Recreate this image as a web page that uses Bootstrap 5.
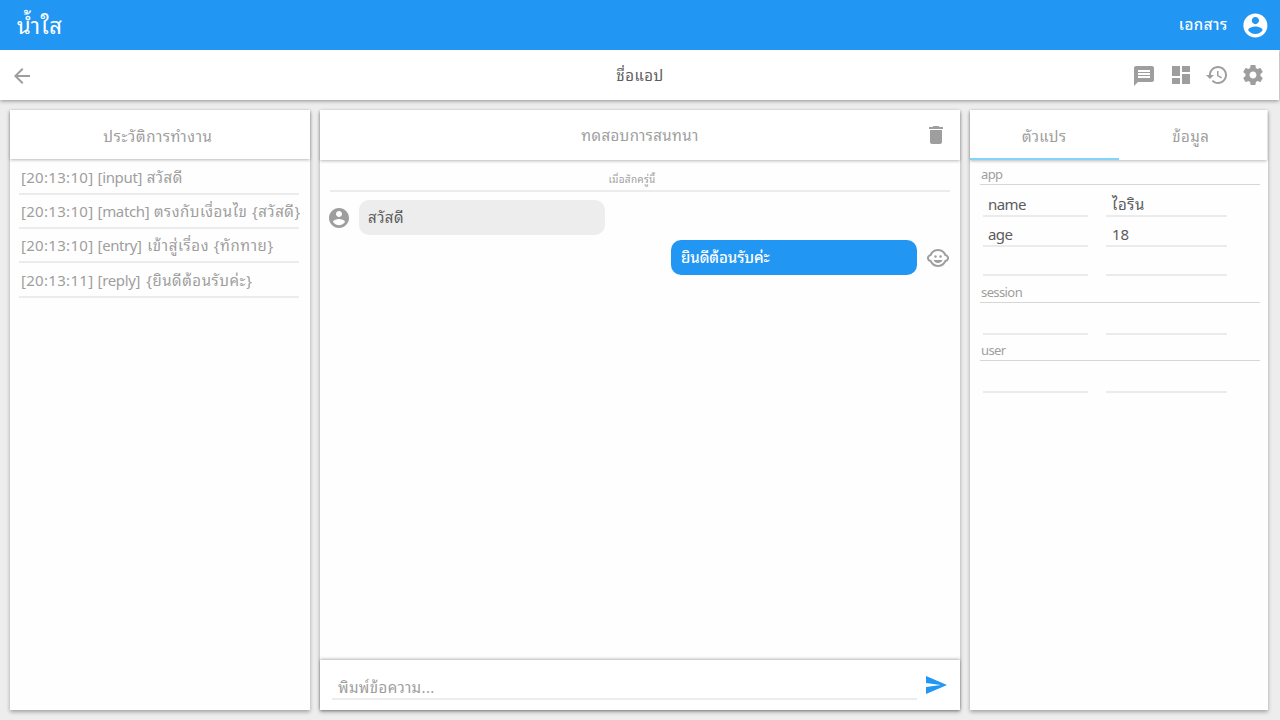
<!DOCTYPE html>
<html lang="th">
<head>
<meta charset="utf-8">
<meta name="viewport" content="width=device-width, initial-scale=1">
<title>น้ำใส</title>
<link href="https://cdn.jsdelivr.net/npm/bootstrap@5.3.0/dist/css/bootstrap.min.css" rel="stylesheet">
<style>
body{font-family:"Noto Sans","Noto Sans Thai Looped","Noto Looped Thai",Loma,Waree,"Noto Sans Thai",sans-serif;font-size:15px;line-height:20px;background:#ededed;color:#9e9e9e;height:720px;overflow:hidden}
svg{fill:#9e9e9e;width:24px;height:24px;flex:none;display:block}
.topbar{height:50px;background:#2196f3;color:#fff;padding:0 10.6px 0 17px;z-index:1}
.topbar svg{fill:#fff;width:28.8px;height:28.8px}
.brand{font-size:22px;line-height:28px;letter-spacing:.6px}
.docs{letter-spacing:.5px;font-weight:500;padding-bottom:3px;margin-right:13px}
.tools{height:50px;background:#fff;margin-right:1px;padding:0 14px 0 10px;box-shadow:0 1px 4px rgba(0,0,0,.4)}
.actions{gap:12px}
.chat-icon{margin:1px 1px -1px -1px}
.app-title{letter-spacing:.5px;padding-left:113px}
.app-title,.ink{color:#5c5c5c}
.workspace{display:grid;grid-template-columns:300px 640px 298px;gap:10px;padding:10px;height:620px}
.panel{background:#fefefe;box-shadow:0 2px 4px rgba(0,0,0,.32);height:600px}
.head{height:50px;background:#fff;box-shadow:0 1px 3px rgba(0,0,0,.28);flex:none}
.log{padding:0 11px 0 9px}
.log li{height:34px;border-bottom:2px solid #ececec;padding:6px 0 0 2px;white-space:nowrap}
.log li:first-child{height:36px;padding-top:8px}
.log li:last-child{height:35px;padding-top:7px}
.stamp{letter-spacing:.3px}
.kind{letter-spacing:-.35px}
.msg{margin-left:1px;letter-spacing:.55px}
.log li:nth-child(3) .kind{letter-spacing:-.4px}
.log li:nth-child(3) .msg{letter-spacing:.65px;margin-left:2px}
.log li:nth-child(4) .msg{margin-left:2.5px}
.when{font-size:10px;line-height:14px;letter-spacing:.3px;margin:0 10px;height:32px;border-bottom:2px solid #ececec;padding:12px 16px 0 0}
.bubble{width:246px;height:35px;border-radius:10px;background:#ededed;padding:7px 9px;letter-spacing:.5px}
.bubble.bot{background:#2196f3;color:#fff;padding:7px 10px;font-weight:500;letter-spacing:-.1px}
.composer{height:50px;background:#fff;box-shadow:0 -1px 3px rgba(0,0,0,.28),0 1px 2px rgba(0,0,0,.15);padding:0 12px}
.entry{width:585px;height:40px;border-bottom:2px solid #ececec;padding:17px 6px 0;letter-spacing:.4px}
.tab{width:149px;border-bottom:2px solid transparent;padding-top:16px;letter-spacing:.4px}
.tab.on{border-color:#81d4fa}
.scope{font-size:13px;line-height:16px;letter-spacing:-.6px;margin:0 8px 0 10px;border-bottom:1px solid #d6d6d6;padding:6px 0 0 1px;height:25px}
.pair{display:grid;grid-template-columns:105px 121px;column-gap:18px;padding:2px 0 0 13px;color:#5c5c5c}
.pair>div{height:30px;border-bottom:2px solid #ebebeb;padding:7px 6px 0}
.pair>div:nth-child(odd){padding-left:5px;letter-spacing:-.6px}
.pair>div:nth-child(2){letter-spacing:.6px}
.pair>div:nth-child(n+5){height:29px}
</style>
</head>
<body>
<header class="topbar position-relative d-flex align-items-center">
  <span class="brand me-auto">น้ำใส</span>
  <span class="docs">เอกสาร</span>
  <svg viewBox="0 0 24 24"><path d="M12 2C6.480 2 2 6.480 2 12s4.480 10 10 10 10-4.480 10-10S17.520 2 12 2zm0 3c1.660 0 3 1.340 3 3s-1.340 3-3 3-3-1.340-3-3 1.340-3 3-3zm0 14.200c-2.500 0-4.710-1.280-6-3.220.03-1.990 4-3.080 6-3.080 1.990 0 5.970 1.090 6 3.080-1.290 1.940-3.500 3.220-6 3.220z"/></svg>
</header>
<nav class="tools d-flex align-items-center">
  <svg viewBox="0 0 24 24" style="margin-top:2px"><path d="M20 11H7.830l5.590-5.590L12 4l-8 8 8 8 1.410-1.410L7.830 13H20v-2z"/></svg>
  <span class="app-title flex-grow-1 text-center">ชื่อแอป</span>
  <div class="actions d-flex">
    <svg viewBox="0 0 24 24" class="chat-icon"><path d="M20 2H4c-1.100 0-1.990.9-1.990 2L2 22l4-4h14c1.100 0 2-.9 2-2V4c0-1.100-.9-2-2-2zm-2 12H6v-2h12v2zm0-3H6V9h12v2zm0-3H6V6h12v2z"/></svg>
    <svg viewBox="0 0 24 24"><path d="M3 13h8V3H3v10zm0 8h8v-6H3v6zm10 0h8V11h-8v10zm0-18v6h8V3h-8z"/></svg>
    <svg viewBox="0 0 24 24"><path d="M13 3c-4.970 0-9 4.030-9 9H1l3.890 3.890.07.14L9 12H6c0-3.870 3.130-7 7-7s7 3.130 7 7-3.130 7-7 7c-1.930 0-3.680-.79-4.940-2.060l-1.420 1.420C8.270 19.990 10.510 21 13 21c4.970 0 9-4.030 9-9s-4.030-9-9-9zm-1 5v5l4.280 2.540.72-1.210-3.500-2.080V8H12z"/></svg>
    <svg viewBox="0 0 24 24"><path d="M19.430 12.980c.04-.32.07-.64.07-.98s-.03-.66-.07-.98l2.110-1.650c.19-.15.24-.42.12-.64l-2-3.460c-.12-.22-.39-.3-.61-.22l-2.490 1c-.52-.4-1.080-.73-1.690-.98l-.38-2.650C14.460 2.180 14.250 2 14 2h-4c-.25 0-.46.18-.49.42l-.38 2.650c-.61.25-1.170.59-1.690.98l-2.490-1c-.23-.09-.49 0-.61.22l-2 3.460c-.13.22-.07.49.12.64l2.110 1.650c-.04.32-.07.65-.07.98s.03.66.07.98l-2.110 1.650c-.19.15-.24.42-.12.64l2 3.460c.12.22.39.3.61.22l2.490-1c.52.4 1.080.73 1.690.98l.38 2.650c.03.24.24.42.49.42h4c.25 0 .46-.18.49-.42l.38-2.650c.61-.25 1.170-.59 1.690-.98l2.490 1c.23.09.49 0 .61-.22l2-3.460c.12-.22.07-.49-.12-.64l-2.110-1.650zM12 15.500c-1.930 0-3.500-1.570-3.500-3.500s1.570-3.500 3.500-3.500 3.500 1.570 3.500 3.500-1.570 3.500-3.500 3.500z"/></svg>
  </div>
</nav>
<main class="workspace">
  <section class="panel">
    <div class="head d-flex align-items-center justify-content-center" style="height:49px;letter-spacing:.65px"><span class="pe-1 pt-1" style="margin-bottom:2px">ประวัติการทำงาน</span></div>
    <ul class="log list-unstyled mb-0">
      <li><span class="stamp">[20:13:10] </span><span class="kind">[input] </span><span class="msg">สวัสดี</span></li>
      <li><span class="stamp">[20:13:10] </span><span class="kind">[match] </span><span class="msg">ตรงกับเงื่อนไข {สวัสดี}</span></li>
      <li><span class="stamp">[20:13:10] </span><span class="kind">[entry] </span><span class="msg">เข้าสู่เรื่อง {ทักทาย}</span></li>
      <li><span class="stamp">[20:13:11] </span><span class="kind">[reply] </span><span class="msg">{ยินดีต้อนรับค่ะ}</span></li>
    </ul>
  </section>
  <section class="panel d-flex flex-column">
    <div class="head d-flex align-items-center pe-2">
      <span class="flex-grow-1 text-center" style="padding-left:36px;letter-spacing:.4px">ทดสอบการสนทนา</span>
      <svg viewBox="0 0 24 24" class="me-1"><path d="M6 19c0 1.100.9 2 2 2h8c1.100 0 2-.9 2-2V7H6v12zM19 4h-3.500l-1-1h-5l-1 1H5v2h14V4z"/></svg>
    </div>
    <div class="when text-center">เมื่อสักครู่นี้</div>
    <div class="d-flex align-items-center" style="margin:8px 0 5px 7px;gap:8px">
      <svg viewBox="0 0 24 24"><path d="M12 2C6.480 2 2 6.480 2 12s4.480 10 10 10 10-4.480 10-10S17.520 2 12 2zm0 3c1.660 0 3 1.340 3 3s-1.340 3-3 3-3-1.340-3-3 1.340-3 3-3zm0 14.200c-2.500 0-4.710-1.280-6-3.220.03-1.990 4-3.080 6-3.080 1.990 0 5.970 1.090 6 3.080-1.290 1.940-3.500 3.220-6 3.220z"/></svg>
      <div class="bubble ink">สวัสดี</div>
    </div>
    <div class="d-flex align-items-center justify-content-end" style="margin-right:10px;gap:9px">
      <div class="bubble bot">ยินดีต้อนรับค่ะ</div>
      <svg viewBox="0 0 24 24"><circle cx="14.500" cy="10.500" r="1.250"/><circle cx="9.500" cy="10.500" r="1.250"/><path d="M22.940 12.660c.04-.21.06-.43.06-.66s-.02-.45-.06-.66c-.25-1.510-1.360-2.740-2.810-3.170-.53-1.120-1.280-2.100-2.190-2.910C16.360 3.850 14.280 3 12 3s-4.360.85-5.940 2.260c-.92.81-1.670 1.800-2.190 2.910-1.450.43-2.560 1.650-2.810 3.170-.04.21-.06.43-.06.66s.02.45.06.66c.25 1.510 1.360 2.740 2.810 3.170.52 1.110 1.270 2.090 2.170 2.890C7.620 20.140 9.710 21 12 21s4.380-.86 5.970-2.280c.9-.8 1.650-1.790 2.170-2.890 1.440-.43 2.550-1.650 2.800-3.170zM19 14c-.1 0-.19-.02-.29-.03-.2.67-.49 1.290-.86 1.860C16.600 17.740 14.450 19 12 19s-4.600-1.260-5.850-3.170c-.37-.57-.66-1.190-.86-1.860-.1.01-.19.03-.29.03-1.100 0-2-.9-2-2s.9-2 2-2c.1 0 .19.02.29.03.2-.67.49-1.290.86-1.860C7.400 6.260 9.550 5 12 5s4.600 1.260 5.850 3.170c.37.57.66 1.190.86 1.860.1-.01.19-.03.29-.03 1.100 0 2 .9 2 2s-.9 2-2 2zM7.500 14c.76 1.770 2.490 3 4.500 3s3.740-1.230 4.500-3h-9z"/></svg>
    </div>
    <div class="composer mt-auto d-flex align-items-start">
      <div class="entry">พิมพ์ข้อความ...</div>
      <svg viewBox="0 0 24 24" style="fill:#2196f3;margin:13px 0 0 7px"><path d="M2.010 21L23 12 2.010 3 2 10l15 2-15 2z"/></svg>
    </div>
  </section>
  <section class="panel">
    <div class="head d-flex text-center" style="margin-right:1px">
      <div class="tab on">ตัวแปร</div>
      <div class="tab pe-1">ข้อมูล</div>
    </div>
    <div class="scope">app</div>
    <div class="pair"><div>name</div><div>ไอริน</div><div>age</div><div>18</div><div></div><div></div></div>
    <div class="scope" style="height:27px;padding-top:8px">session</div>
    <div class="pair"><div></div><div></div></div>
    <div class="scope" style="height:26px;padding-top:7px">user</div>
    <div class="pair"><div></div><div></div></div>
  </section>
</main>
<script src="https://cdn.jsdelivr.net/npm/bootstrap@5.3.0/dist/js/bootstrap.bundle.min.js"></script>
</body>
</html>
